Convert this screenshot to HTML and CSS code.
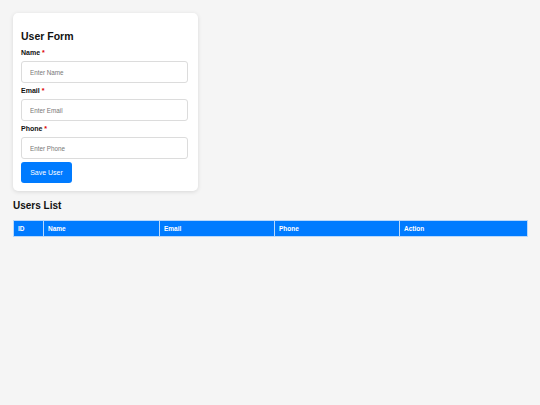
FILE: index.html
```html
<!DOCTYPE html>
<html>
<head>
<meta charset="utf-8">
<link rel="stylesheet" href="styles.css">
</head>
<body>
<div class="page">
  <div class="card">
    <h2 class="title">User Form</h2>
    <div class="field">
      <label class="label">Name <span class="req">*</span></label>
      <input class="input" type="text" placeholder="Enter Name">
    </div>
    <div class="field">
      <label class="label">Email <span class="req">*</span></label>
      <input class="input" type="text" placeholder="Enter Email">
    </div>
    <div class="field">
      <label class="label">Phone <span class="req">*</span></label>
      <input class="input" type="text" placeholder="Enter Phone">
    </div>
    <button class="btn">Save User</button>
  </div>
  <h2 class="list-title">Users List</h2>
  <table class="table">
    <thead>
      <tr>
        <th class="c-id">ID</th>
        <th class="c-name">Name</th>
        <th class="c-email">Email</th>
        <th class="c-phone">Phone</th>
        <th class="c-action">Action</th>
      </tr>
    </thead>
  </table>
</div>
</body>
</html>
```
FILE: styles.css
```css
* { box-sizing: border-box; }
html, body { margin: 0; padding: 0; background: #f5f5f5; }
body { font-family: "Liberation Sans", Arial, sans-serif; color: #111; }
.page { padding: 13px; }
.card {
  width: 185px;
  background: #fff;
  border-radius: 5px;
  box-shadow: 0 1px 4px rgba(0,0,0,0.12);
  padding: 8px 10px 8px 8px;
}
.title { font-size: 10.5px; line-height: 15px; margin: 8px 0 4px; font-weight: bold; }
.field { margin-bottom: 3px; }
.label { display: block; font-size: 7px; line-height: 10px; font-weight: bold; margin-bottom: 3px; }
.req { color: #d00; }
.input {
  display: block;
  width: 167px;
  height: 22px;
  border: 1px solid #dcdcdc;
  border-radius: 3px;
  padding: 0 8px;
  font-family: "Liberation Sans", Arial, sans-serif;
  font-size: 6.3px;
  background: #fff;
  outline: none;
}
.input::placeholder { color: #777; }
.btn {
  display: block;
  width: 51px;
  height: 21px;
  background: #007bff;
  color: #fff;
  border: none;
  border-radius: 3px;
  font-family: "Liberation Sans", Arial, sans-serif;
  font-size: 7px;
  padding: 0;
}
.list-title { font-size: 10px; line-height: 14px; margin: 8px 0 7px; font-weight: bold; }
.table { width: 514px; border-collapse: collapse; table-layout: fixed; }
.table th {
  background: #007bff;
  color: #fff;
  font-size: 6.5px;
  font-weight: bold;
  text-align: left;
  height: 16px;
  padding: 0 4px;
  border: 1px solid #b9d8fb;
}
.c-id { width: 30px; }
.c-name { width: 116px; }
.c-email { width: 115px; }
.c-phone { width: 125px; }
.c-action { width: 128px; }
```
